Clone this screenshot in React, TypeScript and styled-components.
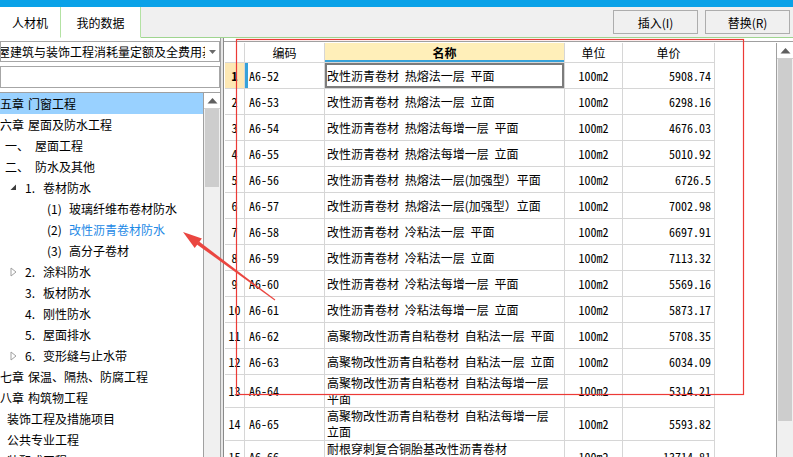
import React from "react";
import styled, { createGlobalStyle } from "styled-components";

const GlobalStyle = createGlobalStyle`
  html, body {
    margin: 0;
    padding: 0;
    background: #ffffff;
    overflow: hidden;
  }
  body {
    font-family: "Noto Sans CJK SC", "Noto Sans", sans-serif;
    font-size: 12px;
    color: #000000;
  }
  * {
    box-sizing: border-box;
  }
`;

const MONO = `"Noto Sans Mono CJK SC", "Liberation Mono", monospace`;

const Page = styled.div`
  position: relative;
  width: 793px;
  height: 457px;
  display: flex;
  flex-direction: column;
  overflow: hidden;
  background: #ffffff;
`;

const TopStripe = styled.div`
  height: 7px;
  background: #0aa2e8;
  flex-shrink: 0;
`;

const TabBar = styled.div`
  height: 31px;
  display: flex;
  align-items: stretch;
  background: #f0f0f0;
  border-bottom: 1px solid #9fd58f;
  flex-shrink: 0;
`;

const Tab = styled.div<{ $w: number }>`
  width: ${({ $w }) => $w}px;
  margin-bottom: -1px;
  background: #ffffff;
  border-right: 1px solid #b3e2a3;
  border-bottom: 1px solid #ffffff;
  display: flex;
  align-items: center;
  justify-content: center;
  font-size: 12px;
`;

const ButtonGroup = styled.div`
  margin-left: auto;
  display: flex;
  gap: 7px;
  padding: 3px 3px 0 0;
  align-items: flex-start;
`;

const ToolButton = styled.button`
  width: 85px;
  height: 24px;
  border: 1px solid #adadad;
  background: #f0f0f0;
  font-family: inherit;
  font-size: 12px;
  color: #000;
  padding: 0;
  display: flex;
  align-items: center;
  justify-content: center;
`;

const Main = styled.div`
  flex: 1;
  display: flex;
  min-height: 0;
`;

const LeftPanel = styled.div`
  width: 220px;
  display: flex;
  flex-direction: column;
  gap: 4px;
  padding-top: 3px;
  flex-shrink: 0;
`;

const SelectBox = styled.div`
  height: 21px;
  border: 1px solid #a6a6a6;
  display: flex;
  align-items: center;
  background: #ffffff;
  overflow: hidden;
`;

const SelectText = styled.span`
  flex: 1;
  min-width: 0;
  white-space: nowrap;
  overflow: hidden;
  margin-left: -3px;
`;

const SelectArrow = styled.span`
  width: 14px;
  flex-shrink: 0;
  display: flex;
  justify-content: center;
  align-items: center;
`;

const SearchBox = styled.div`
  height: 22px;
  border: 1px solid #a6a6a6;
  background: #ffffff;
`;

const TreeBox = styled.div`
  flex: 1;
  display: flex;
  border-top: 1px solid #a0a0a0;
  min-height: 0;
`;

const TreeList = styled.div`
  flex: 1;
  overflow: hidden;
`;

const TreeRow = styled.div<{ $indent: number; $active?: boolean }>`
  height: 21px;
  display: flex;
  align-items: center;
  padding-left: ${({ $indent }) => $indent}px;
  background: ${({ $active }) => ($active ? "#99d1ff" : "transparent")};
  white-space: nowrap;
`;

const Toggle = styled.span`
  width: 15px;
  display: flex;
  align-items: center;
`;

const Prefix = styled.span<{ $w: number }>`
  width: ${({ $w }) => $w}px;
  flex-shrink: 0;
`;

const Label = styled.span<{ $blue?: boolean }>`
  color: ${({ $blue }) => ($blue ? "#1e8ae6" : "#000000")};
`;

const Scrollbar = styled.div`
  width: 17px;
  display: flex;
  flex-direction: column;
  border-left: 1px solid #a0a0a0;
  background: #f0f0f0;
  flex-shrink: 0;
`;

const ScrollUp = styled.div`
  height: 16px;
  background: #ffffff;
  border-bottom: 1px solid #d0d0d0;
  display: flex;
  align-items: center;
  justify-content: center;
`;

const ScrollThumb = styled.div<{ $h: number }>`
  height: ${({ $h }) => $h}px;
  margin: 0 1px;
  background: #cdcdcd;
`;

const Divider = styled.div`
  width: 4px;
  border-left: 1px solid #a0a0a0;
  border-right: 1px solid #8a8a8a;
  background: #e6e6e6;
  flex-shrink: 0;
`;

const TablePanel = styled.div`
  flex: 1;
  display: flex;
  margin-top: 3px;
  border-top: 1px solid #a0a0a0;
  padding-top: 1px;
  min-width: 0;
`;

const TableArea = styled.div`
  flex: 1;
  overflow: hidden;
  background: #ffffff;
  padding-left: 1px;
`;

const Grid = styled.table`
  table-layout: fixed;
  border-collapse: separate;
  border-spacing: 0;
  width: 490px;
  font-size: 12px;
`;

const HeadCell = styled.th<{ $accent?: boolean }>`
  height: 20px;
  padding: 0;
  font-weight: ${({ $accent }) => ($accent ? 700 : 400)};
  background: ${({ $accent }) => ($accent ? "#ffefb9" : "#ffffff")};
  border-right: 1px solid #d6d6d6;
  border-bottom: 1px solid #d6d6d6;
  box-shadow: ${({ $accent }) => ($accent ? "inset 0 -2px 0 #36a2da" : "none")};
  text-align: center;
  line-height: 16px;
`;

const Cell = styled.td`
  height: 26px;
  padding: 0;
  border-right: 1px solid #d6d6d6;
  border-bottom: 1px solid #d6d6d6;
  vertical-align: middle;
  line-height: 16px;
`;

const NumCell = styled(Cell)<{ $current?: boolean }>`
  text-align: center;
  font-family: ${MONO};
  font-weight: ${({ $current }) => ($current ? 700 : 400)};
  background: ${({ $current }) => ($current ? "#fde8b4" : "#ffffff")};
`;

const CodeCell = styled(Cell)<{ $current?: boolean }>`
  font-family: ${MONO};
  padding-left: 4px;
  box-shadow: ${({ $current }) => ($current ? "inset 3px 0 0 #36a2da" : "none")};
`;

const NameCell = styled(Cell)<{ $current?: boolean }>`
  padding: 0 2px;
  word-spacing: 3px;
  white-space: pre-line;
  box-shadow: ${({ $current }) => ($current ? "inset 0 0 0 2px #7c7c7c" : "none")};
`;

const UnitCell = styled(Cell)`
  text-align: center;
  font-family: ${MONO};
`;

const PriceCell = styled(Cell)`
  text-align: right;
  padding-right: 3px;
  font-family: ${MONO};
`;

const Overlay = styled.svg`
  position: absolute;
  left: 0;
  top: 0;
  pointer-events: none;
`;

interface TreeItem {
  indent: number;
  prefix: string;
  prefixWidth: number;
  label: string;
  toggle?: "open" | "closed";
  active?: boolean;
  blue?: boolean;
}

const treeItems: TreeItem[] = [
  { indent: 0, prefix: "五章", prefixWidth: 28, label: "门窗工程", active: true },
  { indent: 0, prefix: "六章", prefixWidth: 28, label: "屋面及防水工程" },
  { indent: 5, prefix: "一、", prefixWidth: 30, label: "屋面工程" },
  { indent: 5, prefix: "二、", prefixWidth: 30, label: "防水及其他" },
  { indent: 10, prefix: "1.", prefixWidth: 18, label: "卷材防水", toggle: "open" },
  { indent: 47, prefix: "(1)", prefixWidth: 22, label: "玻璃纤维布卷材防水" },
  { indent: 47, prefix: "(2)", prefixWidth: 22, label: "改性沥青卷材防水", blue: true },
  { indent: 47, prefix: "(3)", prefixWidth: 22, label: "高分子卷材" },
  { indent: 10, prefix: "2.", prefixWidth: 18, label: "涂料防水", toggle: "closed" },
  { indent: 25, prefix: "3.", prefixWidth: 18, label: "板材防水" },
  { indent: 25, prefix: "4.", prefixWidth: 18, label: "刚性防水" },
  { indent: 25, prefix: "5.", prefixWidth: 18, label: "屋面排水" },
  { indent: 10, prefix: "6.", prefixWidth: 18, label: "变形缝与止水带", toggle: "closed" },
  { indent: 0, prefix: "七章", prefixWidth: 28, label: "保温、隔热、防腐工程" },
  { indent: 0, prefix: "八章", prefixWidth: 28, label: "构筑物工程" },
  { indent: 7, prefix: "", prefixWidth: 0, label: "装饰工程及措施项目" },
  { indent: 7, prefix: "", prefixWidth: 0, label: "公共专业工程" },
  { indent: 7, prefix: "", prefixWidth: 0, label: "装配式工程" },
];

interface Quota {
  code: string;
  name: string;
  unit: string;
  price: string;
}

const quotas: Quota[] = [
  { code: "A6-52", name: "改性沥青卷材 热熔法一层 平面", unit: "100m2", price: "5908.74" },
  { code: "A6-53", name: "改性沥青卷材 热熔法一层 立面", unit: "100m2", price: "6298.16" },
  { code: "A6-54", name: "改性沥青卷材 热熔法每增一层 平面", unit: "100m2", price: "4676.03" },
  { code: "A6-55", name: "改性沥青卷材 热熔法每增一层 立面", unit: "100m2", price: "5010.92" },
  { code: "A6-56", name: "改性沥青卷材 热熔法一层(加强型）平面", unit: "100m2", price: "6726.5" },
  { code: "A6-57", name: "改性沥青卷材 热熔法一层(加强型）立面", unit: "100m2", price: "7002.98" },
  { code: "A6-58", name: "改性沥青卷材 冷粘法一层 平面", unit: "100m2", price: "6697.91" },
  { code: "A6-59", name: "改性沥青卷材 冷粘法一层 立面", unit: "100m2", price: "7113.32" },
  { code: "A6-60", name: "改性沥青卷材 冷粘法每增一层 平面", unit: "100m2", price: "5569.16" },
  { code: "A6-61", name: "改性沥青卷材 冷粘法每增一层 立面", unit: "100m2", price: "5873.17" },
  { code: "A6-62", name: "高聚物改性沥青自粘卷材 自粘法一层 平面", unit: "100m2", price: "5708.35" },
  { code: "A6-63", name: "高聚物改性沥青自粘卷材 自粘法一层 立面", unit: "100m2", price: "6034.09" },
  { code: "A6-64", name: "高聚物改性沥青自粘卷材 自粘法每增一层 平面", unit: "100m2", price: "5314.21" },
  { code: "A6-65", name: "高聚物改性沥青自粘卷材 自粘法每增一层 立面", unit: "100m2", price: "5593.82" },
  { code: "A6-66", name: "耐根穿刺复合铜胎基改性沥青卷材\n热熔法一层 平面", unit: "100m2", price: "13714.81" },
];

const UpArrow = () => (
  <svg width="11" height="7" viewBox="0 0 11 7">
    <polygon points="0.5,6.5 5.5,1 10.5,6.5" fill="#5f5f5f" />
  </svg>
);

const DropArrow = () => (
  <svg width="7" height="4" viewBox="0 0 7 4">
    <polygon points="0,0 7,0 3.5,4" fill="#6a6a6a" />
  </svg>
);

const TreeToggle = ({ kind }: { kind: "open" | "closed" }) =>
  kind === "open" ? (
    <svg width="7" height="7" viewBox="0 0 7 7">
      <polygon points="6,0.5 6,6 0.5,6" fill="#3c3c3c" />
    </svg>
  ) : (
    <svg width="7" height="10" viewBox="0 0 7 10">
      <polygon points="1,1 6,5 1,9" fill="none" stroke="#a0a0a0" />
    </svg>
  );

const App: React.FC = () => {
  return (
    <>
      <GlobalStyle />
      <Page>
        <TopStripe />
        <TabBar>
          <Tab $w={61}>人材机</Tab>
          <Tab $w={80}>我的数据</Tab>
          <ButtonGroup>
            <ToolButton>插入(I)</ToolButton>
            <ToolButton>替换(R)</ToolButton>
          </ButtonGroup>
        </TabBar>

        <Main>
          <LeftPanel>
            <SelectBox>
              <SelectText>屋建筑与装饰工程消耗量定额及全费用基</SelectText>
              <SelectArrow>
                <DropArrow />
              </SelectArrow>
            </SelectBox>
            <SearchBox />
            <TreeBox>
              <TreeList>
                {treeItems.map((item, i) => (
                  <TreeRow key={i} $indent={item.indent} $active={item.active}>
                    {item.toggle && (
                      <Toggle>
                        <TreeToggle kind={item.toggle} />
                      </Toggle>
                    )}
                    {item.prefix && <Prefix $w={item.prefixWidth}>{item.prefix}</Prefix>}
                    <Label $blue={item.blue}>{item.label}</Label>
                  </TreeRow>
                ))}
              </TreeList>
              <Scrollbar>
                <ScrollUp>
                  <UpArrow />
                </ScrollUp>
                <ScrollThumb $h={78} />
              </Scrollbar>
            </TreeBox>
          </LeftPanel>

          <Divider />

          <TablePanel>
            <TableArea>
              <Grid>
                <colgroup>
                  <col style={{ width: 20 }} />
                  <col style={{ width: 80 }} />
                  <col style={{ width: 240 }} />
                  <col style={{ width: 58 }} />
                  <col style={{ width: 92 }} />
                </colgroup>
                <thead>
                  <tr>
                    <HeadCell />
                    <HeadCell>编码</HeadCell>
                    <HeadCell $accent>名称</HeadCell>
                    <HeadCell>单位</HeadCell>
                    <HeadCell>单价</HeadCell>
                  </tr>
                </thead>
                <tbody>
                  {quotas.map((q, i) => (
                    <tr key={q.code}>
                      <NumCell $current={i === 0}>{i + 1}</NumCell>
                      <CodeCell $current={i === 0}>{q.code}</CodeCell>
                      <NameCell $current={i === 0}>{q.name}</NameCell>
                      <UnitCell>{q.unit}</UnitCell>
                      <PriceCell>{q.price}</PriceCell>
                    </tr>
                  ))}
                </tbody>
              </Grid>
            </TableArea>
            <Scrollbar>
              <ScrollUp>
                <UpArrow />
              </ScrollUp>
              <ScrollThumb $h={362} />
            </Scrollbar>
          </TablePanel>
        </Main>

        <Overlay width={793} height={457} viewBox="0 0 793 457">
          <rect x={236.5} y={39.5} width={507} height={355} fill="none" stroke="#ec3a36" strokeWidth={1.2} />
          <polygon points="275.3,299.6 199.1,241.6 196.9,244.4 274.7,300.4" fill="#ea4640" />
          <polygon points="183,232 201.9,238.5 194.7,248.1" fill="#ea4640" />
        </Overlay>
      </Page>
    </>
  );
};

export default App;
